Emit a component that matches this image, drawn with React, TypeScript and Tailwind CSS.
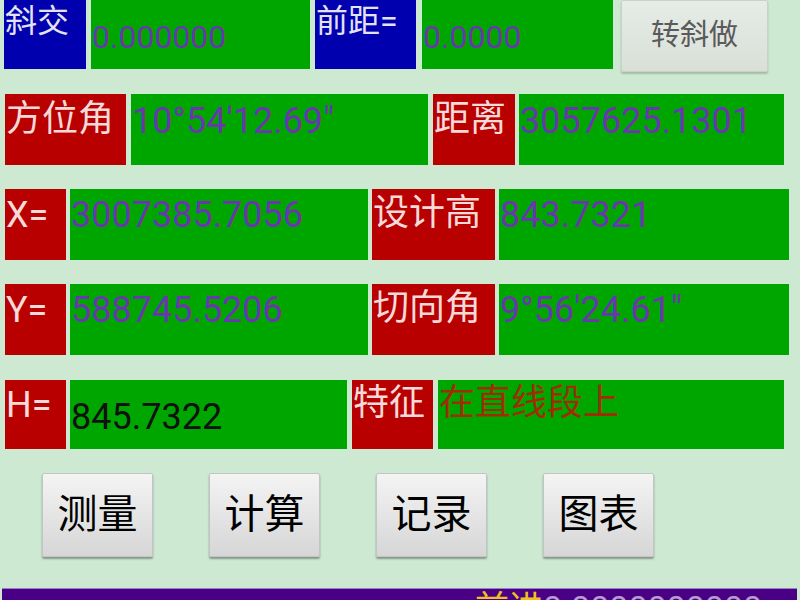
import React from 'react';

const cjk = { fontFamily: 'Roboto, "Noto Sans CJK SC", sans-serif' };

type CellProps = {
  w: string;
  bg: string;
  text: string;
  color: string;
  size?: string;
  pt?: string;
  center?: boolean;
};

function Cell({ w, bg, text, color, size = 'text-[36px]', pt = 'pt-[8px]', center = false }: CellProps) {
  return (
    <div
      className={`${w} h-full ${bg} ${color} ${size} ${center ? 'flex items-center' : pt} leading-none whitespace-nowrap overflow-hidden pl-[1px]`}
      style={cjk}
    >
      {text}
    </div>
  );
}

function Btn({ label }: { label: string }) {
  return (
    <div
      className="w-[111px] h-[84px] flex items-center justify-center text-[40px] text-black rounded-[2px] bg-gradient-to-b from-[#f4f4f4] to-[#d6d6d6] border border-[#c4c4c4] shadow-[0_2px_2px_rgba(0,0,0,0.35)]"
      style={cjk}
    >
      {label}
    </div>
  );
}

export default function App() {
  const red = 'bg-[#b80000]';
  const green = 'bg-[#00a600]';
  const blue = 'bg-[#0000ae]';
  const lbl = 'text-[#f6dada]';
  const val = 'text-[#6a36b0]';

  return (
    <div className="w-[800px] h-[600px] bg-[#cde9d2] overflow-hidden flex flex-col">
      {/* 第一行 */}
      <div className="flex h-[69px] pl-[4px] items-start">
        <div className="h-[69px] w-[82px]">
          <Cell w="w-[82px]" bg={blue} text="斜交" color="text-[#e2e2f4]" size="text-[32px]" pt="pt-[5px]" />
        </div>
        <div className="h-[69px] ml-[5px]">
          <Cell w="w-[219px]" bg={green} text="0.000000" color={val} size="text-[32px]" pt="pt-[21px]" />
        </div>
        <div className="h-[69px] ml-[5px]">
          <Cell w="w-[101px]" bg={blue} text="前距=" color="text-[#e2e2f4]" size="text-[32px]" pt="pt-[5px]" />
        </div>
        <div className="h-[69px] ml-[6px]">
          <Cell w="w-[191px]" bg={green} text="0.0000" color={val} size="text-[32px]" pt="pt-[21px]" />
        </div>
        <div
          className="ml-[8px] w-[147px] h-[72px] flex items-center justify-center text-[29px] text-[#5a5a5a] bg-gradient-to-b from-[#e6ece6] to-[#d8e0d8] border border-[#c8d2c8] shadow-[0_2px_2px_rgba(0,0,0,0.2)] rounded-[2px]"
          style={cjk}
        >
          转斜做
        </div>
      </div>

      {/* 第二行 */}
      <div className="flex h-[71px] mt-[25px] pl-[5px] gap-[5px]">
        <Cell w="w-[121px]" bg={red} text="方位角" color={lbl} pt="pt-[7px]" />
        <Cell w="w-[297px]" bg={green} text={'10°54\'12.69"'} color={val} pt="pt-[9px]" />
        <Cell w="w-[82px]" bg={red} text="距离" color={lbl} pt="pt-[7px]" />
        <div className="ml-[-1px]">
          <Cell w="w-[265px]" bg={green} text="3057625.1301" color={val} pt="pt-[9px]" />
        </div>
      </div>

      {/* 第三行 */}
      <div className="flex h-[72px] mt-[24px] pl-[5px] gap-[4px]">
        <Cell w="w-[61px]" bg={red} text="X=" color={lbl} pt="pt-[8px]" />
        <Cell w="w-[298px]" bg={green} text="3007385.7056" color={val} pt="pt-[8px]" />
        <Cell w="w-[123px]" bg={red} text="设计高" color={lbl} pt="pt-[6px]" />
        <Cell w="w-[290px]" bg={green} text="843.7321" color={val} pt="pt-[8px]" />
      </div>

      {/* 第四行 */}
      <div className="flex h-[71px] mt-[24px] pl-[5px] gap-[4px]">
        <Cell w="w-[61px]" bg={red} text="Y=" color={lbl} pt="pt-[8px]" />
        <Cell w="w-[298px]" bg={green} text="588745.5206" color={val} pt="pt-[8px]" />
        <Cell w="w-[123px]" bg={red} text="切向角" color={lbl} pt="pt-[6px]" />
        <Cell w="w-[290px]" bg={green} text={'9°56\'24.61"'} color={val} pt="pt-[8px]" />
      </div>

      {/* 第五行 */}
      <div className="flex h-[70px] mt-[25px] pl-[5px]">
        <Cell w="w-[61px]" bg={red} text="H=" color={lbl} pt="pt-[7px]" />
        <div className="ml-[4px] h-full">
          <Cell w="w-[277px]" bg={green} text="845.7322" color="text-[#111]" pt="pt-[19px]" />
        </div>
        <div className="ml-[5px] h-full">
          <Cell w="w-[81px]" bg={red} text="特征" color={lbl} pt="pt-[5px]" />
        </div>
        <div className="ml-[5px] h-full">
          <Cell w="w-[346px]" bg={green} text="在直线段上" color="text-[#a02c00]" pt="pt-[5px]" />
        </div>
      </div>

      {/* 按钮 */}
      <div className="flex mt-[24px] pl-[42px] gap-[56px]">
        <Btn label="测量" />
        <Btn label="计算" />
        <Btn label="记录" />
        <Btn label="图表" />
      </div>

      {/* 底部状态栏 */}
      <div className="mt-[31px] ml-[2px] w-[795px] h-[12px] bg-[#4a0084] border-t border-[#9a80c0] overflow-hidden relative shrink-0">
        <div
          className="absolute left-[473px] top-[2px] text-[34px] leading-none text-[#f0c020] whitespace-nowrap"
          style={cjk}
        >
          前进<span className="text-[#b89cd0]">0.0000000000</span>
        </div>
      </div>
    </div>
  );
}
